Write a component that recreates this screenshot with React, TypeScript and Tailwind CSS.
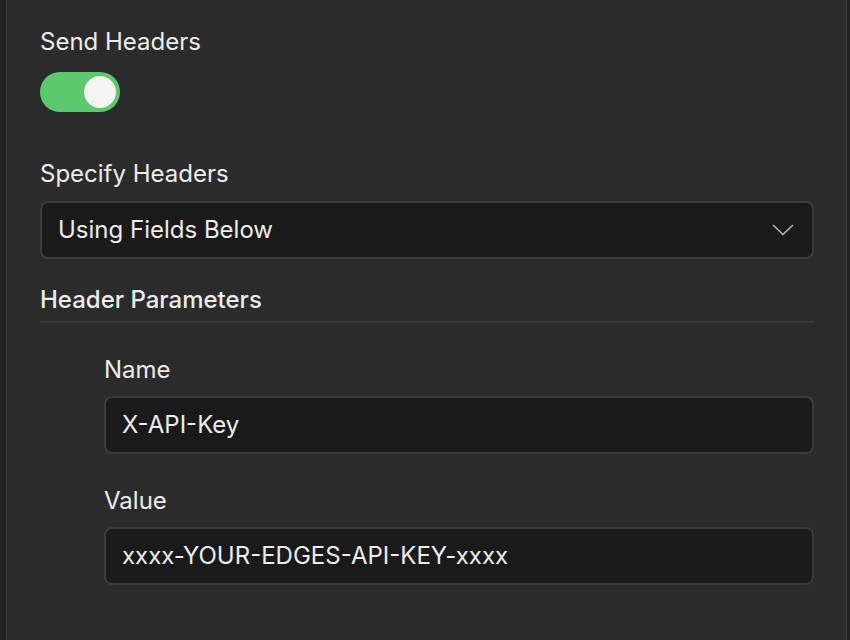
import React from "react";

export default function App() {
  const font = { fontFamily: "Inter, 'Noto Sans', sans-serif" };
  return (
    <div className="w-[850px] h-[640px] bg-[#222222] flex overflow-hidden" style={font}>
      <div className="ml-[6px] w-[841px] h-full bg-[#2b2b2b] border-x border-[#3a3a3a] pl-[33px] pr-[32px] pt-[28px] text-[#ececec]">
        <div className="text-[24px] leading-[28px]">Send Headers</div>
        <div className="mt-[16px] w-[80px] h-[40px] rounded-full bg-[#5bc96c] flex items-center justify-end pr-[4px]">
          <div className="w-[32px] h-[32px] rounded-full bg-[#f4f4f4]" />
        </div>
        <div className="mt-[48px] text-[24px] leading-[28px]">Specify Headers</div>
        <div className="mt-[13px] h-[58px] rounded-[8px] border-2 border-[#3b3b3b] bg-[#1a1a1a] flex items-center justify-between pl-[16px] pr-[18px]">
          <span className="text-[24px]">Using Fields Below</span>
          <svg width="22" height="12" viewBox="0 0 22 12" fill="none">
            <polyline points="1,1 11,10.5 21,1" stroke="#b5b5b5" strokeWidth="1.6" />
          </svg>
        </div>
        <div className="mt-[27px] text-[24px] leading-[28px] font-medium">Header Parameters</div>
        <div className="mt-[7px] h-[2px] bg-[#3a3a3a]" />
        <div className="pl-[64px]">
          <div className="mt-[33px] text-[24px] leading-[28px]">Name</div>
          <div className="mt-[12px] h-[58px] rounded-[8px] border-2 border-[#3b3b3b] bg-[#1a1a1a] flex items-center pl-[16px]">
            <span className="text-[24px]">X-API-Key</span>
          </div>
          <div className="mt-[33px] text-[24px] leading-[28px]">Value</div>
          <div className="mt-[12px] h-[58px] rounded-[8px] border-2 border-[#3b3b3b] bg-[#1a1a1a] flex items-center pl-[16px]">
            <span className="text-[24px]">xxxx-YOUR-EDGES-API-KEY-xxxx</span>
          </div>
        </div>
      </div>
    </div>
  );
}
